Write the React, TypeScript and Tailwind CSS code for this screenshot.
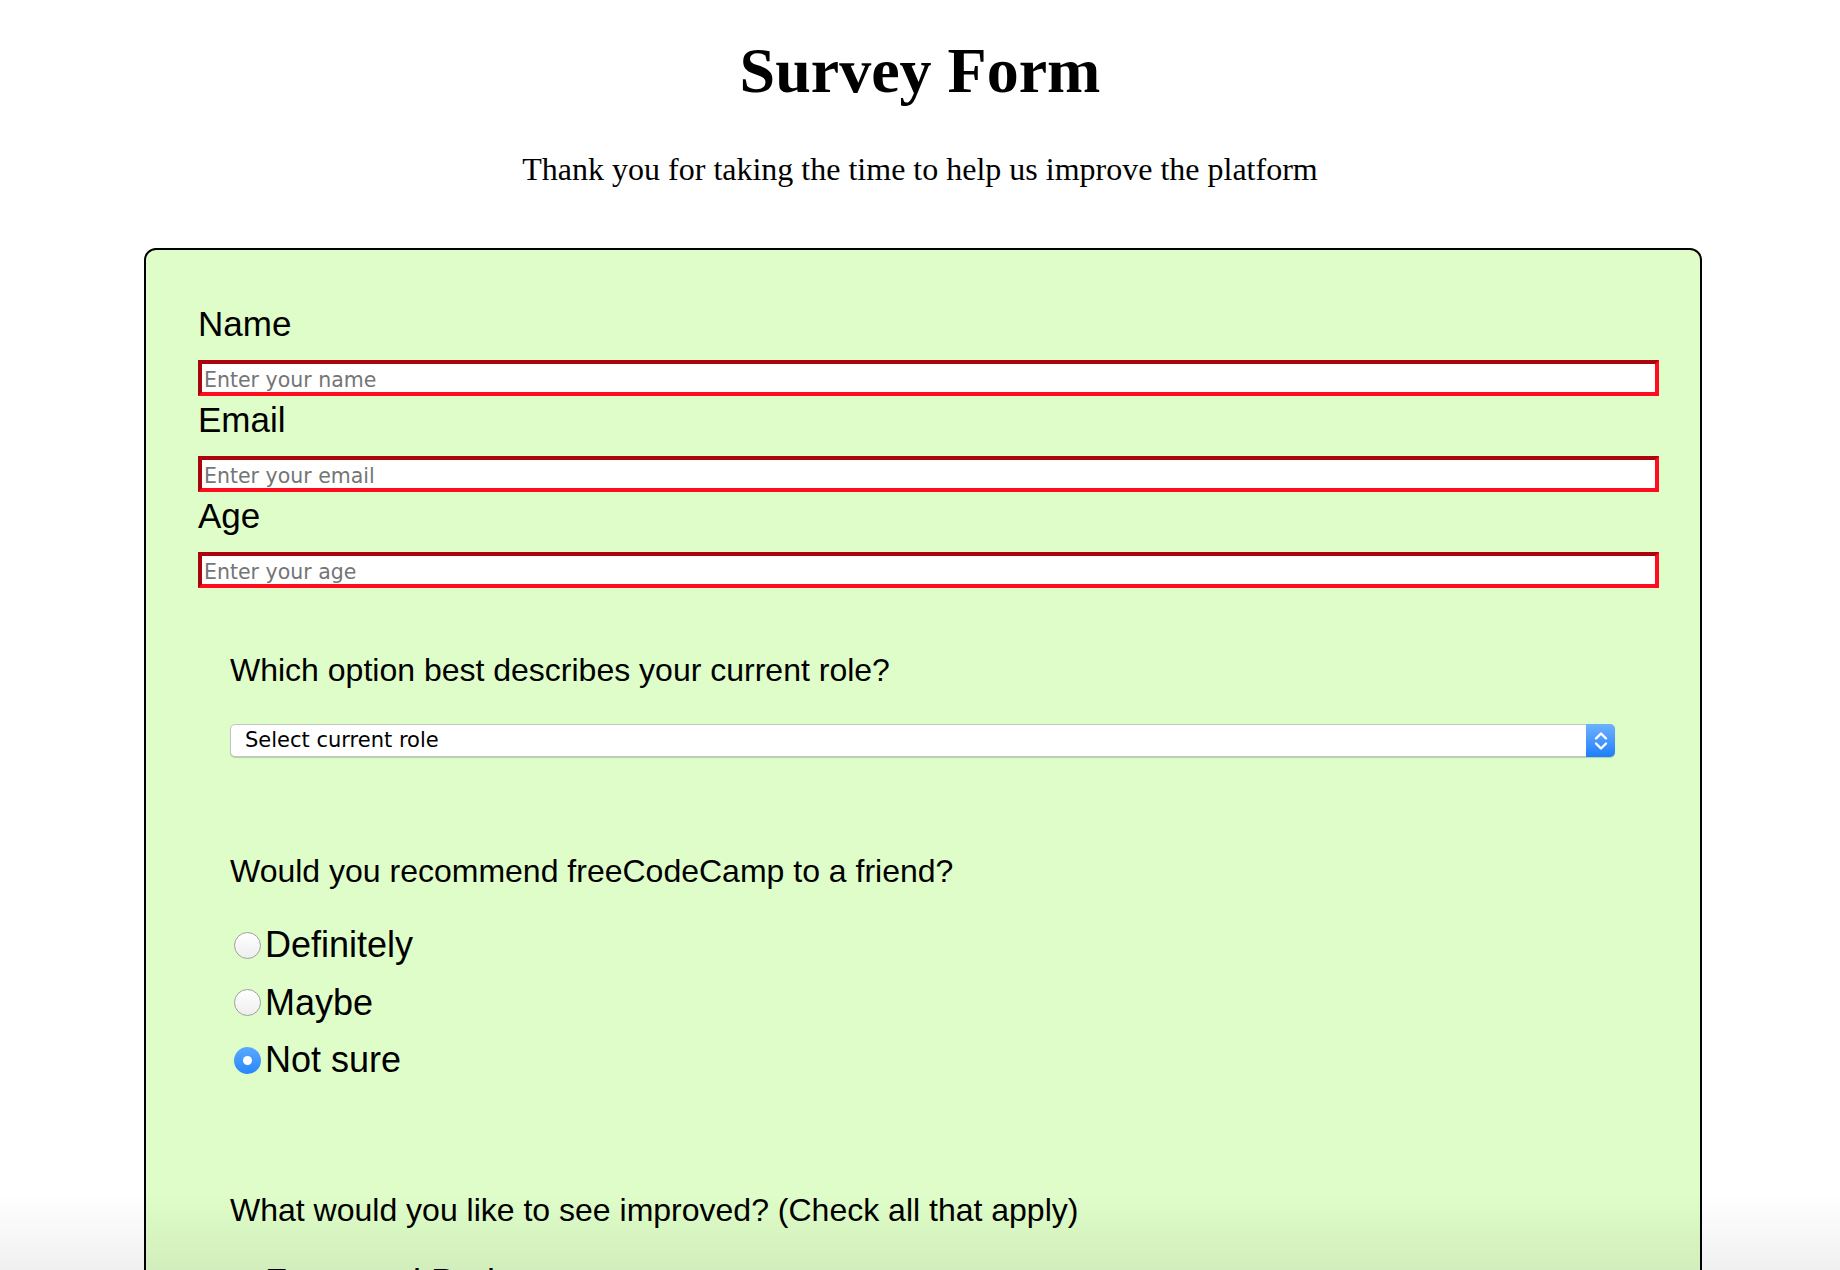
import { useState } from "react";

const sans = "font-['Liberation_Sans',Arial,sans-serif]";
const serif = "font-['Liberation_Serif','Times_New_Roman',serif]";

const fields = [
  { id: "name", label: "Name", placeholder: "Enter your name" },
  { id: "email", label: "Email", placeholder: "Enter your email" },
  { id: "age", label: "Age", placeholder: "Enter your age" },
];

const recommend = ["Definitely", "Maybe", "Not sure"];
const improvements = ["Front-end Projects", "Back-end Projects", "Data Visualization", "Challenges"];

function Radio({ checked }: { checked: boolean }) {
  return checked ? (
    <span className="ml-[4px] flex h-[27px] w-[27px] shrink-0 items-center justify-center rounded-full bg-gradient-to-b from-[#5aa9fd] to-[#2587fb]">
      <span className="h-[9px] w-[9px] rounded-full bg-white" />
    </span>
  ) : (
    <span className="ml-[4px] h-[27px] w-[27px] shrink-0 rounded-full border border-[#9f9f9f] bg-gradient-to-b from-white to-[#eeeeee]" />
  );
}

export default function App() {
  const [choice, setChoice] = useState("Not sure");

  return (
    <div className="relative min-h-[1270px] w-[1840px] bg-white pb-20 text-black">
      <h1 className={`${serif} mt-[34px] text-center text-[64px] font-bold leading-[74px]`}>Survey Form</h1>
      <p className={`${serif} mt-[43px] text-center text-[32px] leading-[37px]`}>
        Thank you for taking the time to help us improve the platform
      </p>

      <form className="ml-[144px] mt-[60px] w-[1558px] rounded-[12px] border-2 border-black bg-[#dffdc8] pb-24 pl-[52px] pr-[41px] pt-[54px]">
        {fields.map((field, index) => (
          <div key={field.id} className={index ? "mt-[4px]" : ""}>
            <label htmlFor={field.id} className={`${sans} block text-[35px] leading-[40px]`}>
              {field.label}
            </label>
            <input
              id={field.id}
              placeholder={field.placeholder}
              className="mt-[16px] block h-[36px] w-full border-4 border-b-[#ff0c1f] border-l-[#a8050f] border-r-[#ff0c1f] border-t-[#a8050f] bg-white px-[2px] pt-[4px] font-['DejaVu_Sans',sans-serif] text-[20.5px] outline-none placeholder:text-[#757575]"
            />
          </div>
        ))}

        <div className={`${sans} -ml-[52px] mr-[44px] mt-[64px] pl-[84px]`}>
          <p className="text-[32px] leading-[37px]">Which option best describes your current role?</p>
          <div className="mt-[35px] flex h-[33px] items-stretch rounded-[5px] border border-[#c4c4c4] bg-white shadow-[0_1px_1px_rgba(0,0,0,0.18)]">
            <span className="flex flex-1 items-center pl-[14px] font-['DejaVu_Sans',sans-serif] text-[21px]">
              Select current role
            </span>
            <span className="-my-px -mr-px flex w-[29px] items-center justify-center rounded-r-[5px] bg-gradient-to-b from-[#6db1fd] to-[#1a7efb]">
              <svg width="14" height="22" viewBox="0 0 14 22" fill="none" stroke="white" strokeWidth="2.4" strokeLinecap="round" strokeLinejoin="round">
                <path d="M2 8.5 7 3.5l5 5" />
                <path d="M2 13.5l5 5 5-5" />
              </svg>
            </span>
          </div>

          <p className="mt-[96px] text-[32px] leading-[37px]">Would you recommend freeCodeCamp to a friend?</p>
          <div className="mt-[34px] flex flex-col gap-y-[15.6px]">
            {recommend.map((option) => (
              <label
                key={option}
                onClick={() => setChoice(option)}
                className="flex h-[42px] items-center gap-[4px] text-[36px] leading-[42px]"
              >
                <Radio checked={choice === option} />
                {option}
              </label>
            ))}
          </div>

          <p className="mt-[111px] text-[32px] leading-[37px]">What would you like to see improved? (Check all that apply)</p>
          <div className="mt-[33px] flex flex-col gap-y-[15.6px]">
            {improvements.map((item) => (
              <label key={item} className="flex h-[42px] items-center gap-[4px] text-[36px] leading-[42px]">
                <span className="ml-[7px] h-[24px] w-[24px] shrink-0 rounded-[5px] border border-[#a9a9a9] bg-gradient-to-b from-white to-[#f1f1f1]" />
                {item}
              </label>
            ))}
          </div>
        </div>
      </form>

      <div className="pointer-events-none fixed inset-x-0 bottom-0 h-[75px] bg-gradient-to-b from-transparent to-black/[0.06]" />
    </div>
  );
}
